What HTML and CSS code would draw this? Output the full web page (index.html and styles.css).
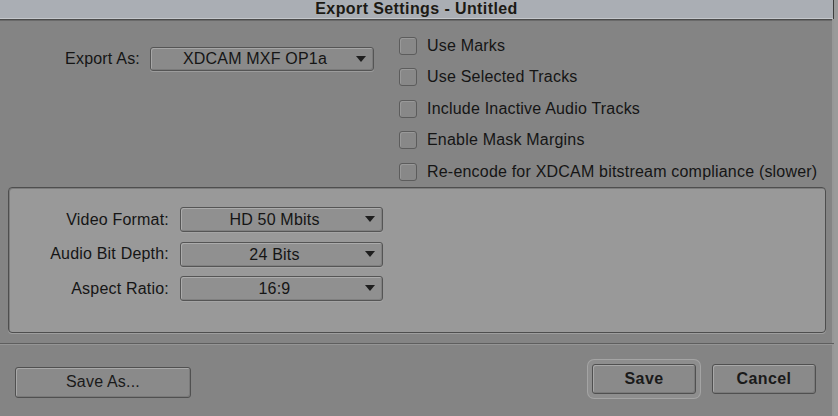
FILE: index.html
```html
<!DOCTYPE html>
<html>
<head>
    <link rel="stylesheet" href="styles.css">
</head>
<body>
    <div class="window">
        <div class="titlebar">Export Settings - Untitled</div>
        <div class="content">
            <div class="top">
                <div class="export-row">
                    <span class="label export-label">Export As:</span>
                    <div class="select export-select">XDCAM MXF OP1a<span class="arrow"></span></div>
                </div>
                <div class="options">
                    <label class="option"><span class="check"></span>Use Marks</label>
                    <label class="option"><span class="check"></span>Use Selected Tracks</label>
                    <label class="option"><span class="check"></span>Include Inactive Audio Tracks</label>
                    <label class="option"><span class="check"></span>Enable Mask Margins</label>
                    <label class="option"><span class="check"></span>Re-encode for XDCAM bitstream compliance (slower)</label>
                </div>
            </div>

            <div class="panel">
                <div class="field">
                    <span class="label field-label">Video Format:</span>
                    <div class="select field-select">HD 50 Mbits<span class="arrow"></span></div>
                </div>
                <div class="field">
                    <span class="label field-label">Audio Bit Depth:</span>
                    <div class="select field-select">24 Bits<span class="arrow"></span></div>
                </div>
                <div class="field">
                    <span class="label field-label">Aspect Ratio:</span>
                    <div class="select field-select">16:9<span class="arrow"></span></div>
                </div>
            </div>

            <div class="separator"></div>

            <div class="buttons">
                <button class="btn save-as">Save As...</button>
                <div class="spacer"></div>
                <div class="default-ring"><button class="btn bold">Save</button></div>
                <button class="btn bold cancel">Cancel</button>
            </div>
        </div>
    </div>
</body>
</html>
```

FILE: styles.css
```css
html, body {
    margin: 0;
    padding: 0;
    background-color: #848484;
}

.window {
    width: 838px;
    height: 416px;
    display: flex;
    flex-direction: column;
    font-family: "Liberation Sans", Arial, sans-serif;
    font-size: 16px;
    letter-spacing: 0.2px;
    color: #151515;
    background-color: #848484;
    box-sizing: border-box;
    border-right: 4px solid #9a9a9a;
    box-shadow: inset -1px 0 0 #3e3e3e;
    overflow: hidden;
}

.titlebar {
    height: 18px;
    line-height: 18px;
    flex-shrink: 0;
    text-align: center;
    font-weight: bold;
    font-size: 16px;
    letter-spacing: 0.4px;
    color: #1c1a14;
    background-color: #aaaeb4;
    border-bottom: 1px solid #c4c7cb;
    box-shadow: 0 1px 0 #4c4c4c, 0 2px 0 #6a6a6a;
    margin-right: 1px;
}

.content {
    flex: 1;
    display: flex;
    flex-direction: column;
    padding: 0 16px 0 8px;
    box-shadow: inset -2px 0 0 #979797;
}

.top {
    display: flex;
    height: 168px;
    flex-shrink: 0;
    padding-top: 11px;
    box-sizing: border-box;
}

.export-row {
    display: flex;
    align-items: center;
    height: 24px;
    margin-top: 17px;
}

.label {
    text-align: right;
    white-space: nowrap;
}

.export-label {
    width: 132px;
    margin-right: 10px;
}

.select {
    position: relative;
    height: 24px;
    line-height: 22px;
    box-sizing: border-box;
    text-align: center;
    border: 1px solid #555;
    border-radius: 3px;
    background-color: #8a8a8a;
    box-shadow: inset 1px 1px 0 #a6a6a6, inset -1px -1px 0 #7a7a7a, 0 1px 0 #9c9c9c;
    padding-right: 14px;
}

.arrow {
    position: absolute;
    right: 7px;
    top: 8px;
    width: 0;
    height: 0;
    border-left: 5px solid transparent;
    border-right: 5px solid transparent;
    border-top: 6px solid #1e1e1e;
}

.export-select {
    width: 224px;
}

.options {
    display: flex;
    flex-direction: column;
    margin-left: 25px;
}

.option {
    display: flex;
    align-items: center;
    height: 31.5px;
    flex-shrink: 0;
    white-space: nowrap;
}

.check {
    width: 18px;
    height: 18px;
    box-sizing: border-box;
    border: 1px solid #5c5c5c;
    border-radius: 3px;
    background-color: #888;
    box-shadow: inset 1px 1px 0 #999;
    margin-right: 10px;
}

.panel {
    width: 818px;
    height: 146px;
    flex-shrink: 0;
    box-sizing: border-box;
    border: 1px solid #4e4e4e;
    border-radius: 4px;
    background-color: #999;
    box-shadow: inset 1px 1px 0 #7c7c7c, 0 1px 0 #9e9e9e;
    padding-top: 19px;
}

.field {
    display: flex;
    align-items: center;
    height: 25px;
    margin-bottom: 9.5px;
}

.field-label {
    width: 160px;
    margin-right: 11px;
}

.field-select {
    width: 203px;
    height: 25px;
    line-height: 23px;
    background-color: #909090;
    box-shadow: inset 1px 1px 0 #ababab, inset -1px -1px 0 #808080, 0 1px 0 #a4a4a4;
}

.separator {
    margin: 10px -16px 0 -8px;
    height: 1px;
    flex-shrink: 0;
    background-color: #5e5e5e;
    border-bottom: 1px solid #959595;
}

.buttons {
    display: flex;
    align-items: center;
    margin-top: 15px;
}

.btn {
    font-family: "Liberation Sans", Arial, sans-serif;
    font-size: 16px;
    letter-spacing: 0.2px;
    color: #1a1a1a;
    height: 30px;
    box-sizing: border-box;
    border: 1px solid #505050;
    border-radius: 3px;
    background-color: #8a8a8a;
    box-shadow: inset 1px 1px 0 #a8a8a8, inset -1px -1px 0 #7a7a7a;
    padding: 0;
}

.save-as {
    width: 176px;
    height: 31px;
    margin-left: 7px;
    margin-top: 6px;
}

.spacer {
    flex: 1;
}

.bold {
    font-weight: bold;
    font-size: 16px;
    letter-spacing: 0.4px;
}

.default-ring {
    padding: 4px;
    border-radius: 6px;
    background-color: #8e8e8e;
    box-shadow: 0 0 0 1px #a4a4a4;
}

.default-ring .btn {
    width: 104px;
    display: block;
}

.cancel {
    width: 104px;
    margin-left: 12px;
    margin-right: 2px;
}
```
